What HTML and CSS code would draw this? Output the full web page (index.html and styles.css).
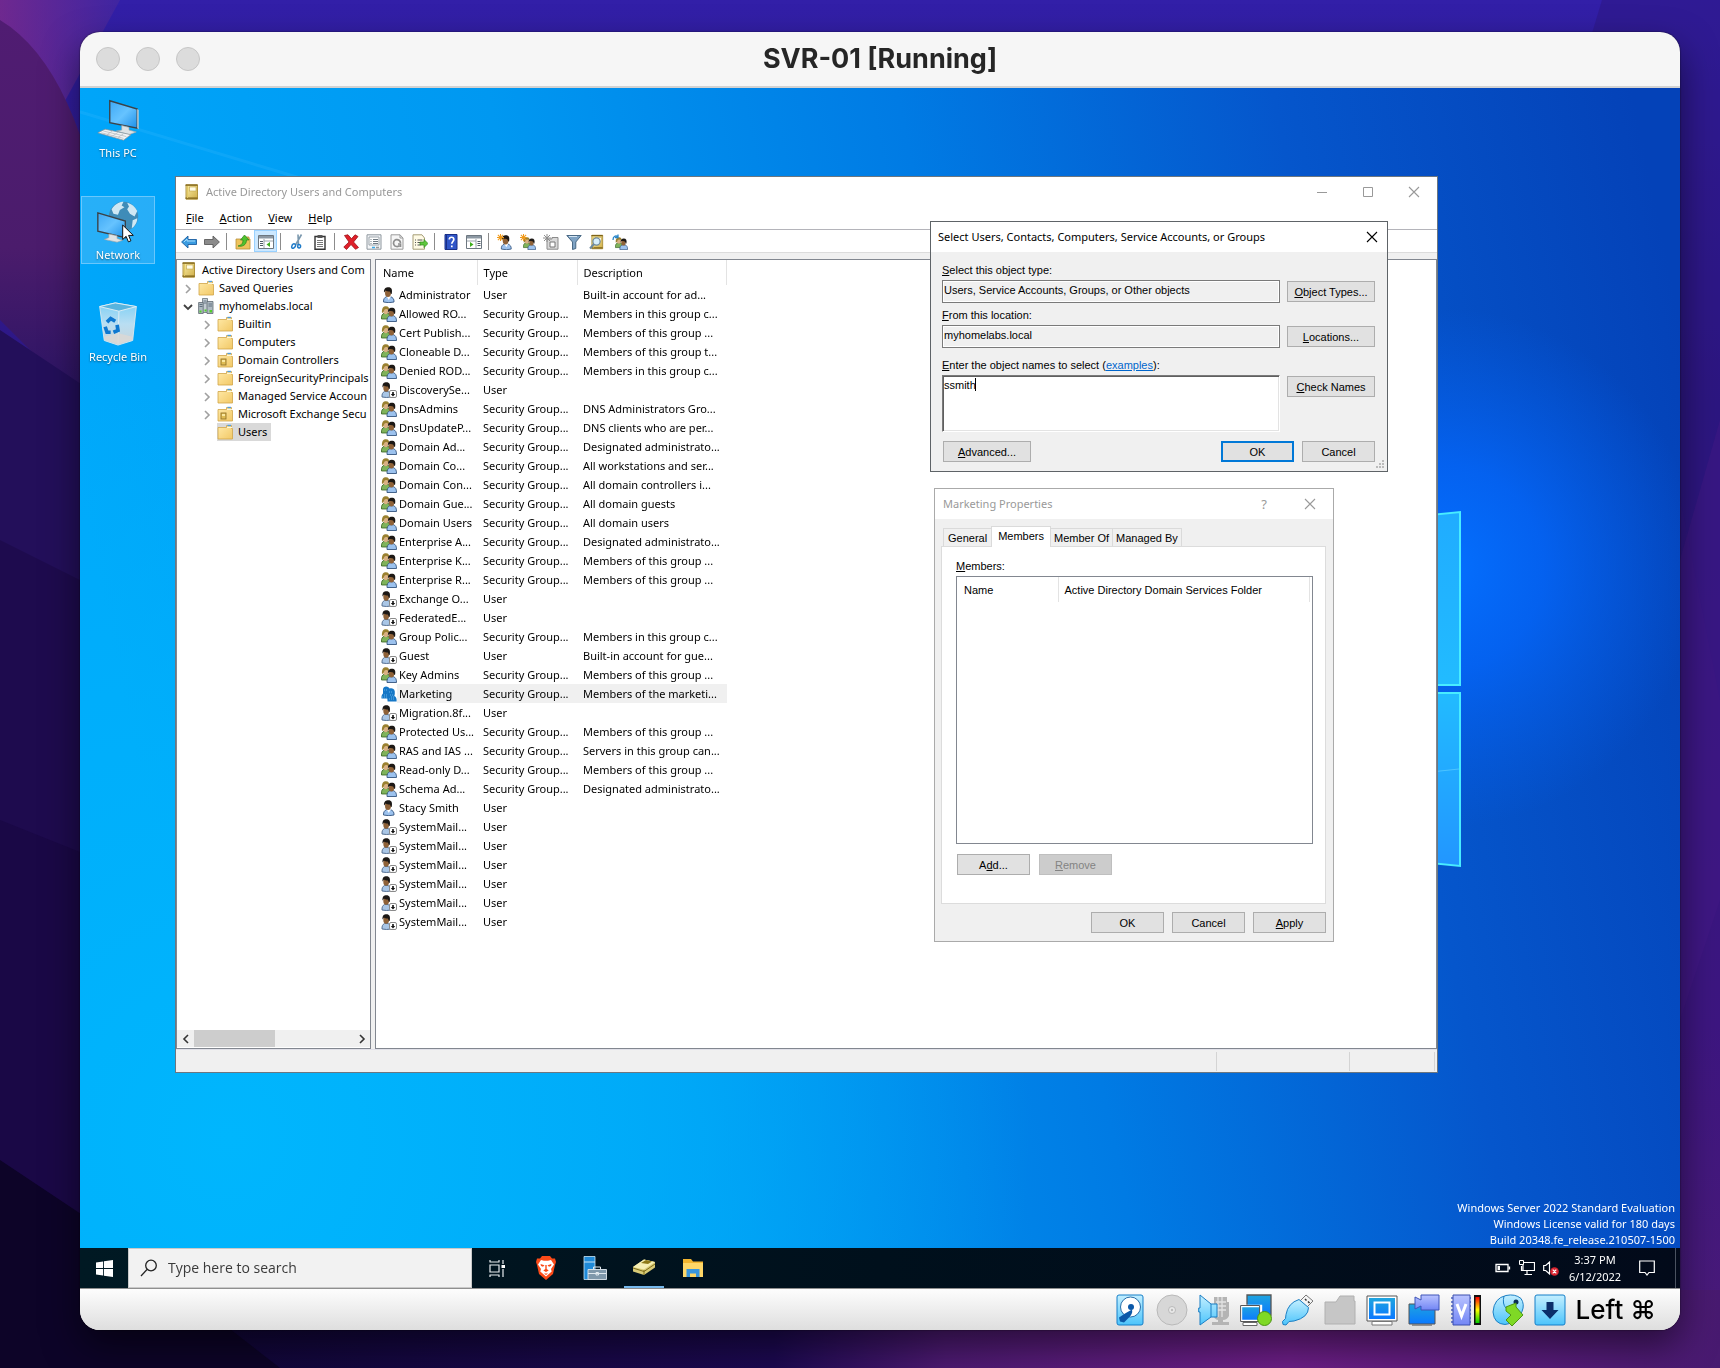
FILE: index.html
```html
<!DOCTYPE html>
<html lang="en">
<head>
<meta charset="utf-8">
<title>SVR-01 [Running]</title>
<link rel="stylesheet" href="styles.css">
</head>
<body>
<svg class="sprite" aria-hidden="true">
  <defs>
    <linearGradient id="gFolder" x1="0" y1="0" x2="1" y2="1"><stop offset="0" stop-color="#ffeaa8"/><stop offset="1" stop-color="#f2c866"/></linearGradient>
    <linearGradient id="gBook" x1="0" y1="0" x2="1" y2="1"><stop offset="0" stop-color="#fbeea6"/><stop offset="1" stop-color="#cfae48"/></linearGradient>
    <linearGradient id="gScreen" x1="0" y1="0" x2="1" y2="1"><stop offset="0" stop-color="#3da8f5"/><stop offset=".5" stop-color="#66c3ff"/><stop offset="1" stop-color="#1c8fe8"/></linearGradient>
    <linearGradient id="gVb" x1="0" y1="0" x2="0" y2="1"><stop offset="0" stop-color="#c4efff"/><stop offset="1" stop-color="#4cc4fb"/></linearGradient>
    <linearGradient id="gVbDeep" x1="0" y1="0" x2="0" y2="1"><stop offset="0" stop-color="#1fa5df"/><stop offset="1" stop-color="#0a78ff"/></linearGradient>
    <linearGradient id="gVio" x1="0" y1="0" x2="0" y2="1"><stop offset="0" stop-color="#b9c3ff"/><stop offset="1" stop-color="#7286f5"/></linearGradient>
    <linearGradient id="gHeat" x1="0" y1="0" x2="0" y2="1"><stop offset="0" stop-color="#f00"/><stop offset=".5" stop-color="#ff0"/><stop offset="1" stop-color="#0c0"/></linearGradient>
    <linearGradient id="gBin" x1="0" y1="0" x2="0" y2="1"><stop offset="0" stop-color="#7fd0f5"/><stop offset=".5" stop-color="#b9def2"/><stop offset="1" stop-color="#c9d2d8"/></linearGradient>
  </defs>
  <symbol id="i-user" viewBox="0 0 16 16">
    <path d="M2.500 15c-.2-3 1-4.500 3.200-5.500h3.600c2.500 1 4 2.500 3.700 5.500q-5 1.400-10.500 0z" fill="#9cc2ee" stroke="#34557f" stroke-width=".9"/>
    <path d="M5.500 9l2.300 4L10 9z" fill="#fff"/>
    <ellipse cx="7" cy="6" rx="3" ry="4" fill="#8f6238"/>
    <path d="M3 5.500C2.700 1.500 5 .3 7.500.3c3 0 4 2.200 3.300 6.200-.8 1.700-1.300-.6-2-1.900C7 4.200 5.500 4 4.800 3.400z" fill="#1c1815"/>
  </symbol>
  <symbol id="i-off" viewBox="0 0 16 16">
    <path d="M1 15c-.2-3 .6-4.500 2.500-5.500h3.600C9 10.500 10 12 10 15q-4.500 1-9 0z" fill="#a9c6e6" stroke="#4c6689" stroke-width=".9"/>
    <ellipse cx="5.200" cy="5.800" rx="2.900" ry="4" fill="#8f6238"/>
    <path d="M1.500 5.500C1.200 1.500 3 .3 5.500.3c3 0 4 2.200 3.300 6.200-.8 1.700-1.300-.6-2-1.900C5 4.200 3.700 4 3 3.400z" fill="#1c1815"/>
    <rect x="8.500" y="8.500" width="7" height="7" rx="1.500" fill="#fff" stroke="#8a8a8a"/>
    <path d="M11.200 10h1.600v2h1.400L12 14.400 9.800 12h1.400z" fill="#111"/>
  </symbol>
  <symbol id="i-group" viewBox="0 0 16 16">
    <path d="M.5 13C.2 9.500 1.300 8 3 7.300h4c1.500.7 2.500 2.200 2.500 5.700z" fill="#7fb35a" stroke="#33601f" stroke-width=".8"/>
    <ellipse cx="4.800" cy="4.800" rx="2.600" ry="3.400" fill="#d9b184"/>
    <path d="M1 7C.5 2 2.300.2 5 .2 7.500.2 8.500 2 8 4.500 6.500 2.800 4.400 2.500 3.400 3.800 2.800 5 2.600 7 1 7z" fill="#9a8130"/>
    <path d="M6 15.500c-.2-3.500 1-5 2.800-5.800h3.700c2 .8 3.100 2.300 3 5.800z" fill="#9cc2ee" stroke="#34557f" stroke-width=".9"/>
    <ellipse cx="10.400" cy="7" rx="2.700" ry="3.600" fill="#8f6238"/>
    <path d="M7 7C6.600 3.200 8.200 1.800 10.800 1.800c3 0 4 2 3.300 5.800-.8 1.400-1.200-1-2-2.100-1.400-.4-3.200-.4-4.100-.5z" fill="#1c1815"/>
  </symbol>
  <symbol id="i-group-sel" viewBox="0 0 16 16">
    <path d="M.5 12.500C.3 9 1.500 8 2 7.500V3C2.500 1 4 .4 5 .4 7 .4 8 1.500 8.500 2.400c4-1 5.800 1 5.300 5.600l-.5 2c2 1 2.500 2.500 2.300 5.500h-9l-.3-3z" fill="#1577c6"/>
    <path d="M1 11h5M3 9h4M8 13h6M8 6h4M3 4h3M9 9h3M10 11h4" stroke="#65b2e8" stroke-dasharray="1 1"/>
  </symbol>
  <symbol id="i-folder" viewBox="0 0 16 16">
    <path d="M1 3.500h8.500V1.500h5v3h1v10.500H1z" fill="url(#gFolder)" stroke="#d0a548" stroke-width=".8"/>
    <path d="M10.500 1.500h3.500" stroke="#4f9de0" stroke-width="1.400"/><path d="M10 3.500h5" stroke="#fff7da"/>
  </symbol>
  <symbol id="i-ou" viewBox="0 0 16 16">
    <use href="#i-folder"/>
    <rect x="4" y="7" width="5" height="6" fill="#e0bd55" stroke="#94752a" stroke-width=".9"/><path d="M5 9h3" stroke="#fff3b5" stroke-width="1.600"/>
  </symbol>
  <symbol id="i-book" viewBox="0 0 16 16">
    <path d="M2 .8h11.500v14.400H2z" fill="url(#gBook)" stroke="#a98b30" stroke-width=".9"/>
    <rect x="5.500" y="3" width="6.500" height="4" fill="#fffce6" stroke="#c0a44c" stroke-width=".6"/>
    <path d="M1.500 1.200h12M1.500 14.200h12" stroke="#7d6218" stroke-width="1.200"/><path d="M3.500 2v12" stroke="#e2c965"/>
  </symbol>
  <symbol id="i-domain" viewBox="0 0 16 16">
    <path d="M4.500.5h5v14h-5z" fill="#c3ccd3" stroke="#69747c" stroke-width=".8"/>
    <path d="M.6 4.500h4.600v11H.6zM9 3.500h6v12H9z" fill="#aeb9c1" stroke="#5f6a72" stroke-width=".8"/>
    <path d="M1.500 6.500h3M1.500 8.500h3M5.500 3h3M5.500 5h3M10.500 6h3.500M10.500 8h3.500" stroke="#596a78" stroke-width=".9"/>
    <path d="M1.500 12.500h2v2h-2zM11.500 12h2.500v2.500h-2.500zM6.500 11.500h2v2h-2z" fill="#4fcf2a"/>
  </symbol>
  <symbol id="i-right" viewBox="0 0 8 10"><path d="M2 1l4 4-4 4" fill="none" stroke="#a0a0a0" stroke-width="1.600"/></symbol>
  <symbol id="i-down" viewBox="0 0 10 8"><path d="M1 2l4 4 4-4" fill="none" stroke="#404040" stroke-width="1.800"/></symbol>
  <symbol id="i-close" viewBox="0 0 12 12"><path d="M1 1l10 10M11 1L1 11" fill="none" stroke="currentColor" stroke-width="1.100"/></symbol>
  <symbol id="i-spark" viewBox="0 0 8 8"><path d="M4 0v8M0 4h8M1 1l6 6M7 1L1 7" stroke="#f09a1a" stroke-width="1.200"/></symbol>
</svg>

<svg class="backdrop" viewBox="0 0 1720 1368" preserveAspectRatio="none" aria-hidden="true">
  <defs>
    <linearGradient id="b0" x1="0" y1="0" x2="0" y2="1"><stop offset="0" stop-color="#321fa8"/><stop offset=".3" stop-color="#2d1680"/><stop offset=".75" stop-color="#3d1680"/><stop offset="1" stop-color="#4b1b78"/></linearGradient>
    <linearGradient id="b1" x1="0" y1="0" x2="1" y2="0"><stop offset="0" stop-color="#a0307c"/><stop offset="1" stop-color="#4a2a9c"/></linearGradient>
    <linearGradient id="b2" x1="0" y1="0" x2="0" y2="1"><stop offset="0" stop-color="#501c72"/><stop offset=".6" stop-color="#4b1c6c"/><stop offset="1" stop-color="#2a1464"/></linearGradient>
    <linearGradient id="b3" x1="0" y1="0" x2="1" y2="0"><stop offset="0" stop-color="#0d0530"/><stop offset=".45" stop-color="#1c0950"/><stop offset=".55" stop-color="#4d1a72"/><stop offset=".75" stop-color="#6c1e86"/><stop offset="1" stop-color="#481a70"/></linearGradient>
  </defs>
  <path fill="url(#b0)" d="M0 0h1720v1368H0z"/>
  <path fill="url(#b1)" d="M0 0h120L60 110 0 60z" opacity=".55"/>
  <path fill="url(#b2)" d="M0 20q100 60 120 340L80 400 0 320z"/>
  <path fill="#230f5a" d="M0 330l120 80v420L0 760z"/>
  <path fill="#1e0b4e" d="M0 540l120 60v360L0 900z"/>
  <path fill="#1a0846" d="M0 820l100 40v400L0 1200z"/>
  <path fill="url(#b3)" d="M0 1290h1720v78H0z"/>
  <path fill="#0d0428" d="M0 1160l90 60 190 148H0z"/>
  <path fill="#2b1680" d="M1602 0h118v700L1590 40z" opacity=".5"/>
  <path fill="#461a86" d="M1720 420v480l-40 120V560z" opacity=".4"/>
</svg>

<main class="vm">
  <header class="vm-title">
    <div class="lights"><span></span><span></span><span></span></div>
    <h1>SVR-01 [Running]</h1>
  </header>

  <section class="desktop">
    <svg class="wallpaper" viewBox="0 0 1600 1160" preserveAspectRatio="xMaxYMin slice" aria-hidden="true">
      <defs>
        <linearGradient id="w0" x1="0" y1=".35" x2="1" y2=".2"><stop offset="0" stop-color="#00a8fb"/><stop offset=".3" stop-color="#0098f1"/><stop offset=".55" stop-color="#007be4"/><stop offset=".78" stop-color="#0556cc"/><stop offset="1" stop-color="#0442b8"/></linearGradient>
        <radialGradient id="w1" gradientUnits="userSpaceOnUse" cx="150" cy="1050" r="800"><stop offset="0" stop-color="#00b6fd"/><stop offset=".5" stop-color="#00b2fb" stop-opacity=".7"/><stop offset="1" stop-color="#00b2fb" stop-opacity="0"/></radialGradient>
        <radialGradient id="w2" gradientUnits="userSpaceOnUse" cx="1360" cy="480" r="260"><stop offset="0" stop-color="#0470ff"/><stop offset=".4" stop-color="#0466fa" stop-opacity=".8"/><stop offset="1" stop-color="#0560ee" stop-opacity="0"/></radialGradient>
        <linearGradient id="w3" x1="0" y1="0" x2="0" y2="1"><stop offset="0" stop-color="#20acff"/><stop offset=".5" stop-color="#22bcff"/><stop offset="1" stop-color="#2296ff"/></linearGradient>
      </defs>
      <path fill="url(#w0)" d="M0 0h1600v1160H0z"/>
      <path fill="url(#w1)" d="M0 0h1600v1160H0z"/>
      <path fill="url(#w2)" d="M1000 100h600v800h-600z"/>
      <path d="M0 24L220 90" stroke="#4cc0ff" stroke-width="3" opacity=".18"/>
      <path d="M1200 442l180-18v173h-180zM1200 605h180v173l-180-18z" fill="url(#w3)" stroke="#48ecff" stroke-width="2"/>
      <path d="M1200 700l179-19" stroke="#4cc4ff" stroke-width="1"/>
    </svg>

    <nav class="shortcuts">
      <a class="shortcut" href="#pc">
        <svg viewBox="0 0 48 48"><path d="M15 3l30 9v21l-30-6z" fill="url(#gScreen)" stroke="#3b4247" stroke-width="1.500"/><path d="M45 12l1.500 1v21L45 33z" fill="#cfd4d7"/><path d="M28 30l8 2v3l8 2-8 3-14-4 6-1z" fill="#dfe3e5" stroke="#9aa2a7" stroke-width=".7"/><path d="M2 38l8-4 28 6-8 6z" fill="#f1f3f4" stroke="#8c959b" stroke-width=".8"/><path d="M8 36l25 6M6 38l24 6M12 40l6-4M18 41.500l6-4M24 43l6-4" stroke="#b8bfc4" stroke-width=".9"/></svg>
        <span>This PC</span>
      </a>
      <a class="shortcut selected" href="#network">
        <svg viewBox="0 0 48 48"><circle cx="30" cy="18" r="16" fill="#3f8cb8"/><path d="M17 10c4-6 10-8 13-8l-2 4 3 2-5 3-2 5-5-1zM34 3c5 1 9 5 11 9l-3 6-5-3-3-5 2-3zM40 22l5-2c0 5-3 9-6 11z" fill="#cfe8f4"/><path d="M2 14l30 9v18L2 34z" fill="url(#gScreen)" stroke="#3b4247" stroke-width="1.500"/><path d="M14 37l9 2v3l6 2-6 2-14-3 5-2z" fill="#dfe3e5" stroke="#9aa2a7" stroke-width=".7"/></svg>
        <span>Network</span>
        <svg class="cursor" viewBox="0 0 12 19"><path d="M.7 1v14.500l3.400-3.200 2.300 5.500 2.500-1-2.300-5.400h4.700z" fill="#fff" stroke="#111" stroke-width="1"/></svg>
      </a>
      <a class="shortcut" href="#bin">
        <svg viewBox="0 0 48 48"><path d="M4 5l17-4 23 4-4 37-16 5-15-5z" fill="url(#gBin)" stroke="#dbe8ee" stroke-width="1"/><path d="M4 5l17-4 23 4-19 5z" fill="#58b4de" stroke="#e4f0f5" stroke-width="1"/><path d="M25 10l-1 36" stroke="#e2eef4" stroke-width="1"/><path d="M9 38l15-4 16 4v3l-16 5-15-5z" fill="#dcd8d4" opacity=".8"/><g fill="none" stroke="#0e78d0" stroke-width="4"><path d="M12 22l4-4 5 3M10 27l2 6h4M19 33l5-2-1-6"/></g></svg>
        <span>Recycle Bin</span>
      </a>
    </nav>

    <section class="win aduc">
      <header class="titlebar">
        <svg class="ic16"><use href="#i-book"/></svg>
        <h2>Active Directory Users and Computers</h2>
        <div class="caption">
          <button aria-label="Minimize"><svg viewBox="0 0 12 12"><path d="M1 6.500h10" stroke="currentColor"/></svg></button>
          <button aria-label="Maximize"><svg viewBox="0 0 12 12"><path d="M1.500 1.500h9v9h-9z" fill="none" stroke="currentColor"/></svg></button>
          <button aria-label="Close"><svg><use href="#i-close"/></svg></button>
        </div>
      </header>
      <nav class="menubar"><button><u>F</u>ile</button><button><u>A</u>ction</button><button><u>V</u>iew</button><button><u>H</u>elp</button></nav>
      <div class="toolbar">
        <button aria-label="Back"><svg viewBox="0 0 16 16"><path d="M.6 8L7 2v3.500h8.500v5H7V14z" fill="#3a9be0" stroke="#1c5fa0" stroke-width=".9"/><path d="M3 8l3-3v2h8" fill="none" stroke="#a5dcfb"/></svg></button>
        <button aria-label="Forward"><svg viewBox="0 0 16 16"><path d="M15.400 8L9 2v3.500H.5v5H9V14z" fill="#8b8b8b" stroke="#5c5c5c" stroke-width=".9"/></svg></button>
        <i></i>
        <button aria-label="Up one level"><svg viewBox="0 0 16 16"><path d="M1 5h8V3h5v2h1v10H1z" fill="#eec35c" stroke="#b8903a" stroke-width=".8"/><path d="M3 12c4-1 5-3 5-6H5.500L9.500 1 14 6h-2.500c0 5-4 7-8.500 6z" fill="#4fc22e" stroke="#2b831a" stroke-width=".7"/></svg></button>
        <button class="on" aria-label="Show console tree"><svg viewBox="0 0 16 16"><path d="M.5 1.500h15v13H.5z" fill="#fff" stroke="#6d7780"/><path d="M1 2h14v2.500H1z" fill="#8c98a3"/><path d="M6 5v9M6 7h9" stroke="#9aa4ac"/><path d="M2 7.500h3M2 9.500h3M2 11.500h3" stroke="#4c5964"/><path d="M12 8v5L8.500 10.500z" fill="#3eae1d"/></svg></button>
        <i></i>
        <button aria-label="Cut"><svg viewBox="0 0 16 16"><path d="M12.500.5L6.500 11M9 .5L9.500 11" stroke="#7b98ae" stroke-width="1.600"/><path d="M3.500 10.500c2-1.500 3.500 0 3 1.500s-2.500 3-3.500 2 0-2.500.5-3.500zM9 10.500c2-.5 3 1 2.500 2.500s-2.500 1-2.800 0z" fill="none" stroke="#1d7ac8" stroke-width="1.500"/></svg></button>
        <button aria-label="Paste"><svg viewBox="0 0 16 16"><path d="M3 2.500h10v12.800H3z" fill="#fff" stroke="#333" stroke-width="1.400"/><path d="M5.500 1h5v3h-5z" fill="#555"/><path d="M5 6.500h6M5 8.500h6M5 10.500h6M5 12.500h6" stroke="#777"/></svg></button>
        <i></i>
        <button aria-label="Delete"><svg viewBox="0 0 16 16"><path d="M1.500 1.500L5 .8l3.500 4L12 .8l3 1.700L10.500 8l5 5.500-3 1.800L8 10.500l-4.500 5L.8 13 6 8z" fill="#e0202a" stroke="#9c1016" stroke-width=".8"/></svg></button>
        <button aria-label="Properties"><svg viewBox="0 0 16 16"><path d="M1 .8h14v14.400H1z" fill="#f4f6f8" stroke="#8d969d"/><path d="M3 3h10v8H3z" fill="#fff" stroke="#9aa3aa"/><path d="M4.500 5.500h1M4.500 7.500h1M4.500 9.500h1M7 5.500h5M7 7.500h5M7 9.500h5" stroke="#6f7a83"/><path d="M6 13.500h3" stroke="#39a8e8" stroke-width="1.500"/><path d="M10 13.500h3" stroke="#999" stroke-width="1.500"/></svg></button>
        <button aria-label="Refresh"><svg viewBox="0 0 16 16"><path d="M2 .8h9L14 4v11.200H2z" fill="#f6f6f6" stroke="#9a9a9a"/><path d="M11 .8V4h3" fill="none" stroke="#9a9a9a"/><path d="M10.500 11.500A3.500 3.500 0 1 1 11.500 9M11.500 13v-3H9" fill="none" stroke="#8e8e8e" stroke-width="1.700"/></svg></button>
        <button aria-label="Export list"><svg viewBox="0 0 16 16"><path d="M1 .8h9L12.500 4v11.200H1z" fill="#fffbe6" stroke="#a69d77"/><path d="M3 6h1M3 8.500h1M3 11h1M5.500 6h5M5.500 8.500h3M5.500 11h3" stroke="#555"/><path d="M8 8h4V5.500L16 9.500l-4 4V11H8z" fill="#5ec83c" stroke="#2f8b1a" stroke-width=".7"/></svg></button>
        <i></i>
        <button aria-label="Help"><svg viewBox="0 0 16 16"><path d="M2 .5h12v15H2z" fill="#2f55c8" stroke="#182f86"/><path d="M3.500 1v14" stroke="#182f86"/><path d="M6.300 5.500c0-3 4.500-3 4.500 0 0 2-2 2-2 4.300M8.800 11.500v1.800" fill="none" stroke="#fff" stroke-width="1.700"/></svg></button>
        <button aria-label="Show action pane"><svg viewBox="0 0 16 16"><path d="M.5 1.500h15v13H.5z" fill="#fff" stroke="#6d7780"/><path d="M1 2h14v2.500H1z" fill="#8c98a3"/><path d="M10 5v9M1 7h9" stroke="#9aa4ac"/><path d="M11.500 7.500h3M11.500 9.500h3M11.500 11.500h3" stroke="#4c5964"/><path d="M4 8v5l3.500-2.500z" fill="#3eae1d"/></svg></button>
        <i></i>
        <button aria-label="New user"><svg viewBox="0 0 16 16"><use href="#i-user" x="2" y="1" width="15" height="15"/><use href="#i-spark" width="7" height="7"/></svg></button>
        <button aria-label="New group"><svg viewBox="0 0 16 16"><use href="#i-group" x="3" y="3" width="13" height="13"/><use href="#i-spark" width="7" height="7"/></svg></button>
        <button aria-label="New organizational unit"><svg viewBox="0 0 16 16"><path d="M4 5h5V3.500h6v11.700H4z" fill="#d9d9d9" stroke="#8b8b8b"/><path d="M7 8h5v5H7z" fill="#fff" stroke="#777"/><path d="M4 0v8M0 4h8M1 1l6 6M7 1L1 7" stroke="#8d8d8d"/></svg></button>
        <button aria-label="Filter"><svg viewBox="0 0 16 16"><path d="M.8 1.500h14.400L9.800 8v6.500L6.500 15.500V8z" fill="#7fa3c4" stroke="#3d5d7b" stroke-width=".9"/><path d="M3 2.500h8" stroke="#d5e6f4"/></svg></button>
        <button aria-label="Find"><svg viewBox="0 0 16 16"><use href="#i-book" x="1" width="15" height="16"/><circle cx="7.500" cy="7.500" r="3.600" fill="#d7effc" stroke="#6e8aa0" stroke-width="1.200"/><path d="M5 10l-4 4.500" stroke="#6e8aa0" stroke-width="2"/></svg></button>
        <button aria-label="Add to group"><svg viewBox="0 0 16 16"><use href="#i-group" x="3" y="3" width="13" height="13"/><path d="M1 6c0-4 3-5 5-3M6 .5v3H3" fill="none" stroke="#2a86c8" stroke-width="1.300"/></svg></button>
      </div>

      <div class="panes">
        <aside class="tree-pane">
          <ul class="tree">
            <li><svg class="ic16"><use href="#i-book"/></svg><span>Active Directory Users and Com</span></li>
            <li class="l1"><svg class="tw"><use href="#i-right"/></svg><svg class="ic16"><use href="#i-folder"/></svg><span>Saved Queries</span></li>
            <li class="l1"><svg class="tw"><use href="#i-down"/></svg><svg class="ic16"><use href="#i-domain"/></svg><span>myhomelabs.local</span></li>
            <li class="l2"><svg class="tw"><use href="#i-right"/></svg><svg class="ic16"><use href="#i-folder"/></svg><span>Builtin</span></li>
            <li class="l2"><svg class="tw"><use href="#i-right"/></svg><svg class="ic16"><use href="#i-folder"/></svg><span>Computers</span></li>
            <li class="l2"><svg class="tw"><use href="#i-right"/></svg><svg class="ic16"><use href="#i-ou"/></svg><span>Domain Controllers</span></li>
            <li class="l2"><svg class="tw"><use href="#i-right"/></svg><svg class="ic16"><use href="#i-folder"/></svg><span>ForeignSecurityPrincipals</span></li>
            <li class="l2"><svg class="tw"><use href="#i-right"/></svg><svg class="ic16"><use href="#i-folder"/></svg><span>Managed Service Accoun</span></li>
            <li class="l2"><svg class="tw"><use href="#i-right"/></svg><svg class="ic16"><use href="#i-ou"/></svg><span>Microsoft Exchange Secu</span></li>
            <li class="l2"><svg class="tw"></svg><div class="current"><svg class="ic16"><use href="#i-folder"/></svg><span>Users</span></div></li>
          </ul>
          <div class="hscroll">
            <button aria-label="Scroll left"><svg viewBox="0 0 8 10"><path d="M6 1L2 5l4 4" fill="none" stroke="#333" stroke-width="1.600"/></svg></button>
            <div class="thumb"></div>
            <button aria-label="Scroll right"><svg viewBox="0 0 8 10"><path d="M2 1l4 4-4 4" fill="none" stroke="#333" stroke-width="1.600"/></svg></button>
          </div>
        </aside>
        <div class="list-pane">
          <table class="objects">
            <thead><tr><th>Name</th><th>Type</th><th>Description</th></tr></thead>
            <tbody>
              <tr><td><svg><use href="#i-user"/></svg>Administrator</td><td>User</td><td>Built-in account for ad...</td></tr>
              <tr><td><svg><use href="#i-group"/></svg>Allowed RO...</td><td>Security Group...</td><td>Members in this group c...</td></tr>
              <tr><td><svg><use href="#i-group"/></svg>Cert Publish...</td><td>Security Group...</td><td>Members of this group ...</td></tr>
              <tr><td><svg><use href="#i-group"/></svg>Cloneable D...</td><td>Security Group...</td><td>Members of this group t...</td></tr>
              <tr><td><svg><use href="#i-group"/></svg>Denied ROD...</td><td>Security Group...</td><td>Members in this group c...</td></tr>
              <tr><td><svg><use href="#i-off"/></svg>DiscoverySe...</td><td>User</td><td></td></tr>
              <tr><td><svg><use href="#i-group"/></svg>DnsAdmins</td><td>Security Group...</td><td>DNS Administrators Gro...</td></tr>
              <tr><td><svg><use href="#i-group"/></svg>DnsUpdateP...</td><td>Security Group...</td><td>DNS clients who are per...</td></tr>
              <tr><td><svg><use href="#i-group"/></svg>Domain Ad...</td><td>Security Group...</td><td>Designated administrato...</td></tr>
              <tr><td><svg><use href="#i-group"/></svg>Domain Co...</td><td>Security Group...</td><td>All workstations and ser...</td></tr>
              <tr><td><svg><use href="#i-group"/></svg>Domain Con...</td><td>Security Group...</td><td>All domain controllers i...</td></tr>
              <tr><td><svg><use href="#i-group"/></svg>Domain Gue...</td><td>Security Group...</td><td>All domain guests</td></tr>
              <tr><td><svg><use href="#i-group"/></svg>Domain Users</td><td>Security Group...</td><td>All domain users</td></tr>
              <tr><td><svg><use href="#i-group"/></svg>Enterprise A...</td><td>Security Group...</td><td>Designated administrato...</td></tr>
              <tr><td><svg><use href="#i-group"/></svg>Enterprise K...</td><td>Security Group...</td><td>Members of this group ...</td></tr>
              <tr><td><svg><use href="#i-group"/></svg>Enterprise R...</td><td>Security Group...</td><td>Members of this group ...</td></tr>
              <tr><td><svg><use href="#i-off"/></svg>Exchange O...</td><td>User</td><td></td></tr>
              <tr><td><svg><use href="#i-off"/></svg>FederatedE...</td><td>User</td><td></td></tr>
              <tr><td><svg><use href="#i-group"/></svg>Group Polic...</td><td>Security Group...</td><td>Members in this group c...</td></tr>
              <tr><td><svg><use href="#i-off"/></svg>Guest</td><td>User</td><td>Built-in account for gue...</td></tr>
              <tr><td><svg><use href="#i-group"/></svg>Key Admins</td><td>Security Group...</td><td>Members of this group ...</td></tr>
              <tr class="current"><td><svg><use href="#i-group-sel"/></svg>Marketing</td><td>Security Group...</td><td>Members of the marketi...</td></tr>
              <tr><td><svg><use href="#i-off"/></svg>Migration.8f...</td><td>User</td><td></td></tr>
              <tr><td><svg><use href="#i-group"/></svg>Protected Us...</td><td>Security Group...</td><td>Members of this group ...</td></tr>
              <tr><td><svg><use href="#i-group"/></svg>RAS and IAS ...</td><td>Security Group...</td><td>Servers in this group can...</td></tr>
              <tr><td><svg><use href="#i-group"/></svg>Read-only D...</td><td>Security Group...</td><td>Members of this group ...</td></tr>
              <tr><td><svg><use href="#i-group"/></svg>Schema Ad...</td><td>Security Group...</td><td>Designated administrato...</td></tr>
              <tr><td><svg><use href="#i-user"/></svg>Stacy Smith</td><td>User</td><td></td></tr>
              <tr><td><svg><use href="#i-off"/></svg>SystemMail...</td><td>User</td><td></td></tr>
              <tr><td><svg><use href="#i-off"/></svg>SystemMail...</td><td>User</td><td></td></tr>
              <tr><td><svg><use href="#i-off"/></svg>SystemMail...</td><td>User</td><td></td></tr>
              <tr><td><svg><use href="#i-off"/></svg>SystemMail...</td><td>User</td><td></td></tr>
              <tr><td><svg><use href="#i-off"/></svg>SystemMail...</td><td>User</td><td></td></tr>
              <tr><td><svg><use href="#i-off"/></svg>SystemMail...</td><td>User</td><td></td></tr>
            </tbody>
          </table>
        </div>
      </div>
      <footer class="statusbar"><span></span><span></span><span></span></footer>
    </section>

    <section class="win props">
      <header class="titlebar">
        <h2>Marketing Properties</h2>
        <div class="caption">
          <button class="help" aria-label="Help">?</button>
          <button aria-label="Close"><svg><use href="#i-close"/></svg></button>
        </div>
      </header>
      <div class="props-body">
        <div class="tabs" role="tablist">
          <button role="tab">General</button><button role="tab" class="active" aria-selected="true">Members</button><button role="tab">Member Of</button><button role="tab">Managed By</button>
        </div>
        <div class="tab-page">
          <div class="label" id="mem"><u>M</u>embers:</div>
          <div class="members-box">
            <table class="members" aria-labelledby="mem"><thead><tr><th>Name</th><th>Active Directory Domain Services Folder</th></tr></thead></table>
          </div>
          <div class="buttons">
            <button class="btn">A<u>d</u>d...</button>
            <button class="btn" disabled><u>R</u>emove</button>
          </div>
        </div>
        <div class="buttons end">
          <button class="btn">OK</button>
          <button class="btn">Cancel</button>
          <button class="btn"><u>A</u>pply</button>
        </div>
      </div>
    </section>

    <section class="win picker">
      <header class="titlebar">
        <h2>Select Users, Contacts, Computers, Service Accounts, or Groups</h2>
        <div class="caption"><button aria-label="Close"><svg><use href="#i-close"/></svg></button></div>
      </header>
      <form class="picker-form">
        <label for="otype"><u>S</u>elect this object type:</label>
        <div class="field-row">
          <input id="otype" readonly value="Users, Service Accounts, Groups, or Other objects">
          <button type="button" class="btn wide"><u>O</u>bject Types...</button>
        </div>
        <label for="oloc"><u>F</u>rom this location:</label>
        <div class="field-row">
          <input id="oloc" readonly value="myhomelabs.local">
          <button type="button" class="btn wide"><u>L</u>ocations...</button>
        </div>
        <div class="names-label"><label for="onames"><u>E</u>nter the object names to select</label> (<a href="#examples">examples</a>):</div>
        <div class="field-row">
          <div class="names"><textarea id="onames" spellcheck="false">ssmith</textarea><span class="caret"></span></div>
          <button type="button" class="btn wide"><u>C</u>heck Names</button>
        </div>
        <div class="buttons actions">
          <button type="button" class="btn wide"><u>A</u>dvanced...</button>
          <button type="button" class="btn default">OK</button>
          <button type="button" class="btn">Cancel</button>
        </div>
      </form>
      <svg class="grip" viewBox="0 0 9 9"><path d="M6 0h2v2H6zM6 3h2v2H6zM3 3h2v2H3zM6 6h2v2H6zM3 6h2v2H3zM0 6h2v2H0z" fill="#bbb"/></svg>
    </section>

    <p class="watermark">Windows Server 2022 Standard Evaluation<br>Windows License valid for 180 days<br>Build 20348.fe_release.210507-1500</p>
  </section>

  <nav class="taskbar">
    <button class="start" aria-label="Start"><svg viewBox="0 0 16 16"><path d="M0 2.300l6.700-1V7.600H0zM7.500 1.200L16 0v7.600H7.500zM0 8.400h6.700v6.300L0 13.700zM7.500 8.400H16V16l-8.500-1.200z" fill="#fff"/></svg></button>
    <label class="search">
      <svg viewBox="0 0 18 18"><circle cx="11" cy="6.500" r="5.300" fill="none" stroke="#222" stroke-width="1.300"/><path d="M7 10.500L1 17" stroke="#222" stroke-width="1.300"/></svg>
      <input type="text" placeholder="Type here to search" aria-label="Search">
    </label>
    <div class="apps">
      <button aria-label="Task View"><svg viewBox="0 0 24 24"><path d="M5 9h9v7H5zM5 6V4M14 6V4M4.500 6h10M4.500 19h10M5 19v2M14 19v2M18 4v4M18 13v8" fill="none" stroke="#e8edf0" stroke-width="1.200"/><path d="M16.500 9H20v3h-3.500z" fill="#fff"/></svg></button>
      <button aria-label="Brave"><svg viewBox="0 0 24 24"><path d="M8 0h8l2 2.500h3L22 6l-1 3-2 9-7 6-7-6-2-9-1-3 1-3.500h3z" fill="#fb4a18"/><path d="M7 4l3 .7h4L17 4l3 4.500-3 4.500.7 2.500L12 20.500 6.300 15.500 7 13 4 8.500z" fill="#fff"/><path d="M6.500 8l4 1.200-1.500 1.600-2-.8zM17.500 8l-4 1.200 1.500 1.600 2-.8zM11.300 9h1.400v4l2 1.500-2.700 1.500-2.700-1.500 2-1.500zM10 17.500h4L12 19z" fill="#fb4a18"/></svg></button>
      <button aria-label="Server Manager"><svg viewBox="0 0 24 24"><path d="M1 .5h11v23H1z" fill="#1f8ad8" stroke="#c8e4f5" stroke-width=".8"/><path d="M1 6h11" stroke="#c8e4f5"/><path d="M5 13.500h18.500v10H5z" fill="#7f98ab" stroke="#dfe8ee" stroke-width=".9"/><path d="M10.500 13V11h7v2M5 17.500h18M13 16.500h2.500v2.500H13z" fill="none" stroke="#dfe8ee" stroke-width="1"/></svg></button>
      <button class="running" aria-label="Active Directory Users and Computers"><svg viewBox="0 0 24 24"><path d="M1 11L12 3.500 23 6v5.500L12 19 1 15.500z" fill="#d8cb76"/><path d="M1 11L12 3.500 23 6 12 13.500z" fill="#f6efb4"/><path d="M9 7l5-3 6 1.500-4 2.500z" fill="#8e7a18"/><path d="M1 12l11 3.500L23 8M12 14v5" fill="none" stroke="#7f6d1b" stroke-width="1"/></svg></button>
      <button aria-label="File Explorer"><svg viewBox="0 0 24 24"><path d="M2 3h8l2 2.500h10V21H2z" fill="#f3b52f"/><path d="M2 7h20v14H2z" fill="#ffd767"/><path d="M5.500 21v-8h13v8h-3.500v-3.500H9V21z" fill="#3a96dd"/></svg></button>
    </div>
    <div class="tray">
      <svg viewBox="0 0 16 16"><path d="M1 4.500h12v7H1zM14.500 6.500v3" fill="none" stroke="#fff" stroke-width="1.300"/><path d="M2.500 6H5v4H2.500z" fill="#fff"/></svg>
      <svg viewBox="0 0 16 16"><path d="M4 2.500h11.500v8H4zM8 10.500v4M5.500 14.500H13M2.500 6v4.500H6" fill="none" stroke="#fff" stroke-width="1.200"/><path d="M.5.500h4v4h-4z" fill="#020d18" stroke="#fff"/></svg>
      <svg viewBox="0 0 16 16"><path d="M.7 5.500h2L6.500 2v12L2.700 10.500h-2z" fill="none" stroke="#fff" stroke-width="1.200"/><circle cx="11.500" cy="11.500" r="4.300" fill="#d8232f"/><path d="M9.700 9.700l3.600 3.600M13.300 9.700l-3.600 3.600" stroke="#fff" stroke-width="1.200"/></svg>
      <time>3:37 PM<br>6/12/2022</time>
      <svg class="notice" viewBox="0 0 16 16"><path d="M.7 1h14.600v11.500H10L8 15l-2-2.500H.7z" fill="none" stroke="#fff" stroke-width="1.200"/></svg>
      <button class="peek" aria-label="Show desktop"></button>
    </div>
  </nav>

  <footer class="vm-status">
    <svg viewBox="0 0 32 32"><rect x="3" y="1" width="26" height="30" rx="2" fill="url(#gVb)" stroke="#147fc8"/><circle cx="16.500" cy="13" r="10" fill="#fff" stroke="#2a6ea8"/><circle cx="17" cy="13" r="3" fill="#0b58a8"/><path d="M18 15.500q1 4-3 8l-5 5-4-1-1-4 6-4z" fill="#0b58a8"/></svg>
    <svg viewBox="0 0 32 32"><circle cx="16" cy="16" r="15" fill="#d7d7d7" stroke="#b9b9b9"/><circle cx="16" cy="16" r="3.500" fill="#e9e9e9" stroke="#b9b9b9"/><circle cx="16" cy="16" r="1.200" fill="#bbb"/></svg>
    <svg viewBox="0 0 32 32"><path d="M16 3h13v5h2v14q-2 4-6 4v2h6v3H14v-3h6v-2q-4-1-4-4z" fill="#b4b4b4"/><path d="M18 8h10M18 12h10M18 16h10M20 3v20M24 3v20" stroke="#e2e2e2" stroke-width="1.300"/><path d="M2 1l11 9h6v13h-6L2 31V18H.7v-4H2z" fill="url(#gVb)" stroke="#1b7fc4"/><path d="M13 10v13" stroke="#1b7fc4"/></svg>
    <svg viewBox="0 0 32 32"><path d="M7 1h24v20H7z" fill="url(#gVbDeep)" stroke="#555" stroke-width="1.300"/><path d="M1 12h20v15H1z" fill="url(#gVbDeep)" stroke="#fff" stroke-width="2.400"/><path d="M.6 11.500h19v16H.6z" fill="none" stroke="#555"/><path d="M3 28.500h14v3H3z" fill="#fff" stroke="#666"/><circle cx="24.500" cy="24.500" r="7" fill="#7fd925" stroke="#4c9413"/></svg>
    <svg viewBox="0 0 32 32"><path d="M18 7l6-6 7 6-6 6z" fill="#f4f4f4" stroke="#777"/><path d="M23 5l1.500 1.500M26 7.500L27.500 9" stroke="#333" stroke-width="1.500"/><path d="M17 5.500l9.500 8q0 10-14.500 13.500l-5 .5-3 3.500-3-.5-.5-3 3-3 .5-4Q6 9 17 5.500z" fill="url(#gVb)" stroke="#1b7fc4"/></svg>
    <svg viewBox="0 0 32 32"><path d="M1 8h11l4-6h14v5h1v23H1z" fill="#c6c6c6" stroke="#b0b0b0"/></svg>
    <svg viewBox="0 0 32 32"><path d="M1 2h30v25H1z" fill="#fff" stroke="#555"/><path d="M3 4h26v21H3z" fill="url(#gVbDeep)"/><path d="M8.500 8.500h15v12h-15z" fill="none" stroke="#fff" stroke-width="2"/><path d="M6 27.500h20v3.500H6z" fill="#fff" stroke="#777"/></svg>
    <svg viewBox="0 0 32 32"><path d="M1 10h26v20H1z" fill="url(#gVbDeep)" stroke="#555"/><path d="M4 31h20" stroke="#777" stroke-width="1.500"/><path d="M13 1h18v15H13v-4l-6 3V3l6 3z" fill="url(#gVio)" stroke="#3f54b8"/></svg>
    <svg viewBox="0 0 32 32"><path d="M1 4h20M1 8h20M1 12h20M1 16h20M1 20h20M1 24h20M1 28h20" stroke="#4a5fc0" stroke-width="1.500" stroke-dasharray="2.500 15"/><path d="M3 1h17v30H3z" fill="url(#gVio)" stroke="#3a4fae"/><path d="M7 10l4.500 12L16 10" fill="none" stroke="#fff" stroke-width="3"/><path d="M24 1h7v30h-7z" fill="#111"/><path d="M25.500 3h4v26h-4z" fill="url(#gHeat)"/></svg>
    <svg viewBox="0 0 32 32"><path d="M1 18Q2 4 14 1.500q9-2 15 3 4 6 1 13-5 12-17 13Q2 30 1 18z" fill="url(#gVb)" stroke="#1b7fc4"/><path d="M12 2q-2 8 2 12" fill="none" stroke="#1b7fc4"/><circle cx="24" cy="8" r="2.500" fill="#0b2f56"/><path d="M14 13l10-4v4l7 8-11 11-6-6 5-5-5-4z" fill="#7fd925" stroke="#4c9413"/></svg>
    <svg viewBox="0 0 32 32"><rect x="1" y="1" width="30" height="30" rx="2" fill="url(#gVb)" stroke="#147fc8"/><path d="M12.500 8h7v8h5L16 25l-8.500-9h5z" fill="#0b2f6a"/></svg>
    <span>Left ⌘</span>
  </footer>
</main>
</body>
</html>
```
FILE: styles.css
```css
* { box-sizing: border-box; }

body {
  margin: 0;
  min-height: 100vh;
  display: flex;
  padding: 32px 40px 38px 80px;
  background: #2d1680;
  font: 11px/16px "Noto Sans", "Open Sans", sans-serif;
  color: #000;
}

h1, h2, p, ul { margin: 0; padding: 0; font-weight: 400; }
svg { display: block; flex: none; }
button { font: inherit; color: inherit; border: 0; padding: 0; background: none; }
.sprite { position: absolute; width: 0; height: 0; }
.backdrop { position: fixed; inset: 0; width: 100%; height: 100%; z-index: -1; }

/* Virtual machine window */
.vm {
  flex: 1;
  display: flex;
  flex-direction: column;
  min-width: 0;
  border-radius: 20px;
  overflow: hidden;
  background: #f6f6f6;
  box-shadow: 0 0 2px rgba(0, 0, 0, .7), 0 16px 36px rgba(0, 0, 0, .5);
}
.vm-title {
  height: 56px;
  display: grid;
  grid-template-columns: 1fr auto 1fr;
  align-items: center;
  padding: 0 16px;
  border-bottom: 2px solid #d2d2d2;
}
.vm-title h1 { font: 700 27px/32px Inter, sans-serif; color: #262626; }
.lights { display: flex; gap: 16px; }
.lights span {
  width: 24px;
  height: 24px;
  border-radius: 50%;
  background: #dcdcdc;
  border: 1px solid #c6c6c6;
}

/* Desktop */
.desktop { flex: 1; position: relative; overflow: hidden; background: #0078e0; }
.wallpaper { position: absolute; inset: 0; width: 100%; height: 100%; }
.shortcuts {
  position: relative;
  display: flex;
  flex-direction: column;
  gap: 34px;
  padding: 6px 1px;
  width: 76px;
}
.shortcut {
  position: relative;
  height: 68px;
  display: flex;
  flex-direction: column;
  align-items: center;
  justify-content: space-between;
  color: #fff;
  text-decoration: none;
  text-shadow: 0 1px 2px rgba(0, 0, 0, .5);
  white-space: nowrap;
  border: 1px solid transparent;
  padding-top: 3px;
}
.shortcut > svg:first-child { width: 44px; height: 44px; }
.shortcut.selected { background: rgba(130, 200, 245, .3); border-color: rgba(150, 215, 255, .6); }
.cursor { position: absolute; left: 40px; top: 27px; width: 12px; height: 19px; }
.watermark {
  position: absolute;
  right: 5px;
  bottom: 0;
  color: #fff;
  text-align: right;
}

/* Windows */
.win {
  position: absolute;
  display: flex;
  flex-direction: column;
  background: #f0f0f0;
  border: 1px solid #6b7680;
}
.titlebar {
  height: 30px;
  display: flex;
  align-items: center;
  background: #fff;
  color: #999;
}
.titlebar h2 { font-size: 11px; white-space: nowrap; }
.caption { margin-left: auto; display: flex; }
.caption button { width: 46px; height: 28px; display: grid; place-items: center; }
.caption svg { width: 12px; height: 12px; }
.caption .help { font-size: 13px; }
.ic16 { width: 16px; height: 16px; }

.aduc { left: 95px; top: 88px; width: 1263px; height: 897px; }
.aduc > .titlebar { padding-left: 8px; gap: 6px; }
.menubar { height: 22px; display: flex; gap: 16px; padding-left: 10px; background: #fff; }
.toolbar {
  height: 24px;
  display: flex;
  padding-left: 1px;
  background: #fff;
  border-top: 1px solid #b4b4ba;
  border-bottom: 1px solid #dcdcdc;
}
.toolbar button { width: 23px; display: grid; place-items: center; padding-top: 1px; }
.toolbar svg { width: 16px; height: 16px; }
.toolbar .on { background: #cce8ff; border: 1px solid #99d1ff; }
.toolbar i { width: 1px; margin: 3px 4px 2px 3px; background: #8c8c8c; }
.panes { flex: 1; min-height: 0; display: flex; gap: 4px; padding-top: 6px; }

.tree-pane {
  width: 195px;
  display: flex;
  flex-direction: column;
  justify-content: space-between;
  border: 1px solid #828790;
  background: #fff;
  overflow: hidden;
}
.tree { list-style: none; padding-top: 1px; }
.tree li { height: 18px; display: flex; align-items: center; gap: 5px; white-space: nowrap; padding-left: 4px; }
.tree .l1 { padding-left: 6px; }
.tree .l2 { padding-left: 25px; }
.tree .tw { width: 10px; height: 10px; margin-top: 2px; }
.current { background: #f0f0f0; }
.tree .current { display: flex; align-items: center; gap: 5px; height: 18px; padding-right: 4px; background: #d9d9d9; }
.hscroll { height: 17px; display: flex; margin-bottom: 1px; background: #f0f0f0; }
.hscroll button { width: 17px; display: grid; place-items: center; }
.hscroll svg { width: 8px; height: 10px; }
.hscroll .thumb { width: 81px; margin-right: auto; background: #cdcdcd; }

.list-pane { flex: 1; border: 1px solid #828790; background: #fff; }
.objects { width: 351px; table-layout: fixed; border-collapse: collapse; }
th { font-weight: 400; text-align: left; padding: 0; }
.objects th { height: 25px; padding-left: 6px; border-right: 1px solid #e3e3e3; }
.objects th:first-child { width: 101px; padding-left: 7px; }
.objects th:nth-child(2) { width: 100px; }
.objects td { height: 19px; padding: 0 0 0 6px; line-height: 18px; white-space: nowrap; }
.objects td:first-child { padding-left: 23px; }
.objects td svg { float: left; width: 16px; height: 16px; margin: 1px 0 0 -18px; }
.objects tr.current td:first-child { background: linear-gradient(90deg, #fff 21px, #f0f0f0 21px); }

.statusbar { height: 23px; display: flex; padding: 2px 2px 1px 0; border-top: 1px solid #e0e0e8; }
.statusbar span { border-right: 1px solid #d4d4d4; }
.statusbar span:nth-child(1) { flex: 1; }
.statusbar span:nth-child(2) { width: 133px; }
.statusbar span:nth-child(3) { width: 85px; }

/* Dialog parts */
.btn {
  width: 73px;
  height: 21px;
  border: 1px solid #adadad;
  background: #e1e1e1;
  font: 11px/16px "Liberation Sans", Arial, sans-serif;
}
.btn.wide { width: 88px; }
.btn.default { border: 2px solid #0078d7; }
.btn:disabled { background: #ccc; border-color: #bfbfbf; color: #838383; }
.buttons { display: flex; gap: 8px; }
.buttons.end { justify-content: flex-end; }

.picker { left: 850px; top: 133px; width: 458px; border-color: #5e6367; }
.picker .titlebar { color: #000; padding-left: 7px; }
.picker .caption button { width: 30px; }
.picker-form {
  padding: 10px 12px 9px 11px;
  font: 11px/16px "Liberation Sans", Arial, sans-serif;
  display: flex;
  flex-direction: column;
}
.picker-form > label, .names-label { height: 18px; }
.names-label { margin-top: 9px; }
.picker-form > label[for="oloc"] { margin-top: 4px; }
.field-row { display: flex; gap: 7px; }
.field-row .btn { margin-top: 1px; }
.field-row input {
  flex: 1;
  height: 23px;
  border: 1px solid #7a7a7a;
  box-shadow: inset 0 0 0 1px #fff;
  background: #f0f0f0;
  padding: 0 1px 3px;
  font: inherit;
}
.names { position: relative; flex: 1; height: 57px; }
.names textarea {
  width: 100%;
  height: 57px;
  display: block;
  resize: none;
  font: inherit;
  padding: 1px;
  border: 1px solid;
  border-color: #7a7a7a #fff #fff #7a7a7a;
  box-shadow: inset 1px 1px 0 #5f5f5f, inset -1px -1px 0 #e3e3e3;
  background: #fff;
}
.caret { position: absolute; left: 33px; top: 3px; width: 1px; height: 13px; background: #000; }
.actions { margin-top: 9px; padding-left: 1px; }
.actions .wide { margin-right: auto; }
.picker-form a { color: #0066cc; }
.grip { position: absolute; right: 2px; bottom: 2px; width: 9px; height: 9px; }

.props { left: 854px; top: 400px; width: 400px; border-color: #aaa; }
.props .titlebar { padding-left: 8px; }
.props-body { padding: 7px 7px 8px 6px; font: 11px/16px "Liberation Sans", Arial, sans-serif; }
.tabs { display: flex; align-items: flex-end; padding-left: 2px; }
.tabs button { height: 18px; padding: 0 3px; border: 1px solid #dadada; border-bottom: 0; margin-left: -1px; white-space: nowrap; }
.tabs button:first-child { margin-left: 0; padding: 0 4px; }
.tabs .active { height: 21px; padding: 0 6px 3px; background: #fff; margin-bottom: -1px; position: relative; }
.tab-page { border: 1px solid #dcdcdc; background: #fff; padding: 11px 12px 28px 14px; }
.label { height: 18px; }
.members-box { height: 268px; border: 1px solid #828790; margin-bottom: 10px; }
.members { width: 353px; border-collapse: collapse; table-layout: fixed; }
.members th { height: 25px; padding-left: 6px; border-right: 1px solid #e3e3e3; }
.members th:first-child { width: 101px; padding-left: 7px; }
.tab-page .buttons { padding-left: 1px; gap: 9px; }
.props-body > .end { margin-top: 8px; }

/* Taskbar */
.taskbar { height: 40px; display: flex; background: linear-gradient(90deg, #001923, #00101c 50%, #020a1a); color: #fff; }
.start { width: 48px; display: grid; place-items: center; }
.start svg { width: 17px; height: 17px; }
.search {
  width: 344px;
  display: flex;
  align-items: center;
  gap: 10px;
  padding-left: 11px;
  background: #f2f2f2;
  border: 1px solid #c9c9c9;
}
.search svg { width: 18px; height: 18px; }
.search input { flex: 1; min-width: 0; border: 0; background: none; font: 14px/20px "Open Sans", sans-serif; padding: 0; }
.search input::placeholder { color: #3a3a3a; opacity: 1; }
.apps { display: flex; gap: 9px; padding-left: 5px; }
.apps button { width: 40px; display: grid; place-items: center; }
.apps svg { width: 24px; height: 24px; }
.apps .running { border-bottom: 2px solid #76b9ed; padding-top: 2px; }
.tray { margin-left: auto; display: flex; align-items: center; gap: 8px; padding-right: 4px; }
.tray svg { width: 16px; height: 16px; }
.tray time { text-align: center; line-height: 17px; width: 62px; margin-left: -3px; }
.tray .notice { margin-left: 5px; }
.tray .peek { width: 1px; height: 40px; margin-left: 12px; background: #4a5260; }

/* Host status strip */
.vm-status {
  height: 42px;
  display: flex;
  align-items: center;
  justify-content: flex-end;
  gap: 10px;
  padding-right: 24px;
  border-top: 1px solid #8f8f8f;
  background: linear-gradient(#fdfdfd, #dedede);
}
.vm-status svg { width: 32px; height: 32px; }
.vm-status span { font: 500 26px/32px Inter, "DejaVu Sans", sans-serif; white-space: nowrap; }
```
